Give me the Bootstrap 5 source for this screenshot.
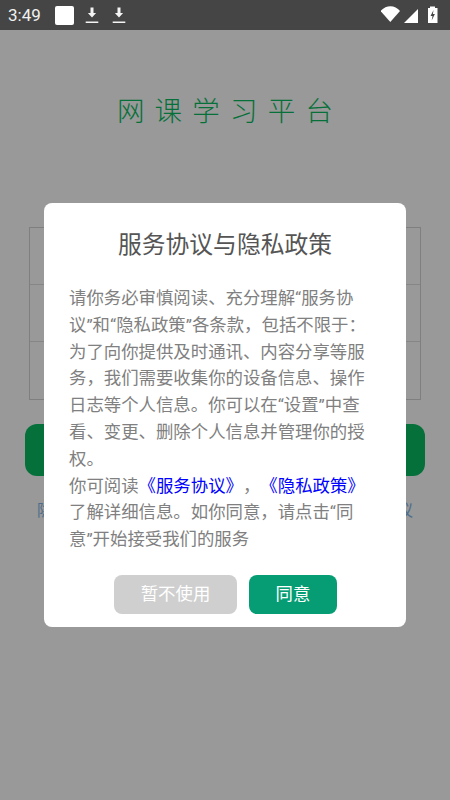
<!DOCTYPE html>
<html lang="zh-CN">
<head>
<meta charset="utf-8">
<meta name="viewport" content="width=device-width, initial-scale=1">
<title>网课学习平台</title>
<link href="https://cdn.jsdelivr.net/npm/bootstrap@5.3.0/dist/css/bootstrap.min.css" rel="stylesheet">
<style>
html,body{height:100%;}
body{width:450px;height:800px;overflow:hidden;background:#fff;font-family:Roboto,"Noto Sans CJK SC",sans-serif;position:relative;text-spacing-trim:space-all;}
.sbar{height:30px;background:#454545;color:#fff;padding:0 9px 0 8px;position:relative;z-index:2;}
.sbar-time{font-size:17px;font-weight:400;line-height:30px;width:47px;color:#f0f0f0;}
.sbar-sq{width:19px;height:19px;background:#fff;border-radius:2px;margin-right:9px;}
.sbar-dl{width:18px;height:30px;display:block;margin-right:9px;}
.brand{margin:0;padding-top:64px;padding-left:10px;height:197px;text-align:center;font-size:27.500px;font-weight:300;line-height:36px;letter-spacing:10.200px;color:#0bbb62;}
.login-grid{margin:0 29px;width:392px;height:173px;border:1px solid #d4d4d4;}
.login-row{height:57px;border-bottom:1px solid #e0e0e0;}
.login-row:last-child{border-bottom:0;}
.login-btn{display:block;margin:24px 25px 0;width:400px;height:52px;background:#0bbb62;border:0;border-radius:12px;}
.agree-line{margin:23px 0 0;padding:0 37px;font-size:16px;line-height:24px;}
.agree-line a{color:#7fb6e6;text-decoration:none;}
.veil{position:absolute;left:0;right:0;top:30px;bottom:0;background:rgba(0,0,0,.4);z-index:1;}
.pact{position:absolute;left:44px;top:173px;width:362px;height:424px;background:#fff;border-radius:8px;padding:0 25px;}
.pact-title{margin:0;padding-top:25px;height:67px;text-align:center;font-size:23.800px;line-height:34px;font-weight:400;color:#555;}
.pact-body{margin:0;font-size:17.400px;line-height:26.800px;color:#808080;width:300px;padding-top:15px;}
.pact-body a{color:#0000ff;text-decoration:none;}
.pact-acts{margin-top:22px;padding-left:45px;gap:12px;}
.pact-no,.pact-yes{height:39px;border:0;border-radius:8px;padding:0;font-size:17.400px;line-height:39px;color:#fff;}
.pact-no{width:123px;background:#cfcfcf;}
.pact-yes{width:88px;background:#069d74;}
</style>
</head>
<body>
<div class="sbar d-flex align-items-center">
  <span class="sbar-time">3:49</span>
  <span class="sbar-sq"></span>
  <svg class="sbar-dl" viewBox="0 0 18 30"><path d="M7.500 7.500h3v5.500h2.600L9 17.400 4.900 13h2.600z" fill="#f4f4f4"/><rect x="2.700" y="21.500" width="12.600" height="1.500" fill="#f4f4f4"/></svg>
  <svg class="sbar-dl" viewBox="0 0 18 30"><path d="M7.500 7.500h3v5.500h2.600L9 17.400 4.900 13h2.600z" fill="#f4f4f4"/><rect x="2.700" y="21.500" width="12.600" height="1.500" fill="#f4f4f4"/></svg>
  <svg class="ms-auto d-block" width="60" height="30" viewBox="0 0 60 30">
    <path d="M-.5 11C5 4.500 14 4.500 19 11L9.300 22z" fill="#fff"/>
    <path d="M23 23 37 9v14z" fill="#fff"/>
    <path d="M47 8h2V6.500h5V8h2.500v15H47z" fill="#fff"/>
    <path d="M52.500 10 49.500 16h2l-.8 4.500 3.200-6.500h-2z" fill="#454545"/>
  </svg>
</div>
<h1 class="brand">网课学习平台</h1>
<div class="login-grid">
  <div class="login-row"></div>
  <div class="login-row"></div>
  <div class="login-row"></div>
</div>
<button class="login-btn btn" type="button" aria-label="登录"></button>
<p class="agree-line d-flex justify-content-between"><a href="#">隐私</a><a href="#">协议</a></p>
<div class="veil">
  <div class="pact">
    <h2 class="pact-title">服务协议与隐私政策</h2>
    <p class="pact-body">请你务必审慎阅读、充分理解“服务协议”和“隐私政策”各条款，包括不限于：为了向你提供及时通讯、内容分享等服务，我们需要收集你的设备信息、操作日志等个人信息。你可以在“设置”中查看、变更、删除个人信息并管理你的授权。<br>你可阅读<a href="#">《服务协议》</a>，<a href="#">《隐私政策》</a>了解详细信息。如你同意，请点击“同意”开始接受我们的服务</p>
    <div class="pact-acts d-flex">
      <button class="pact-no btn" type="button">暂不使用</button>
      <button class="pact-yes btn" type="button">同意</button>
    </div>
  </div>
</div>
<script src="https://cdn.jsdelivr.net/npm/bootstrap@5.3.0/dist/js/bootstrap.bundle.min.js"></script>
</body>
</html>
